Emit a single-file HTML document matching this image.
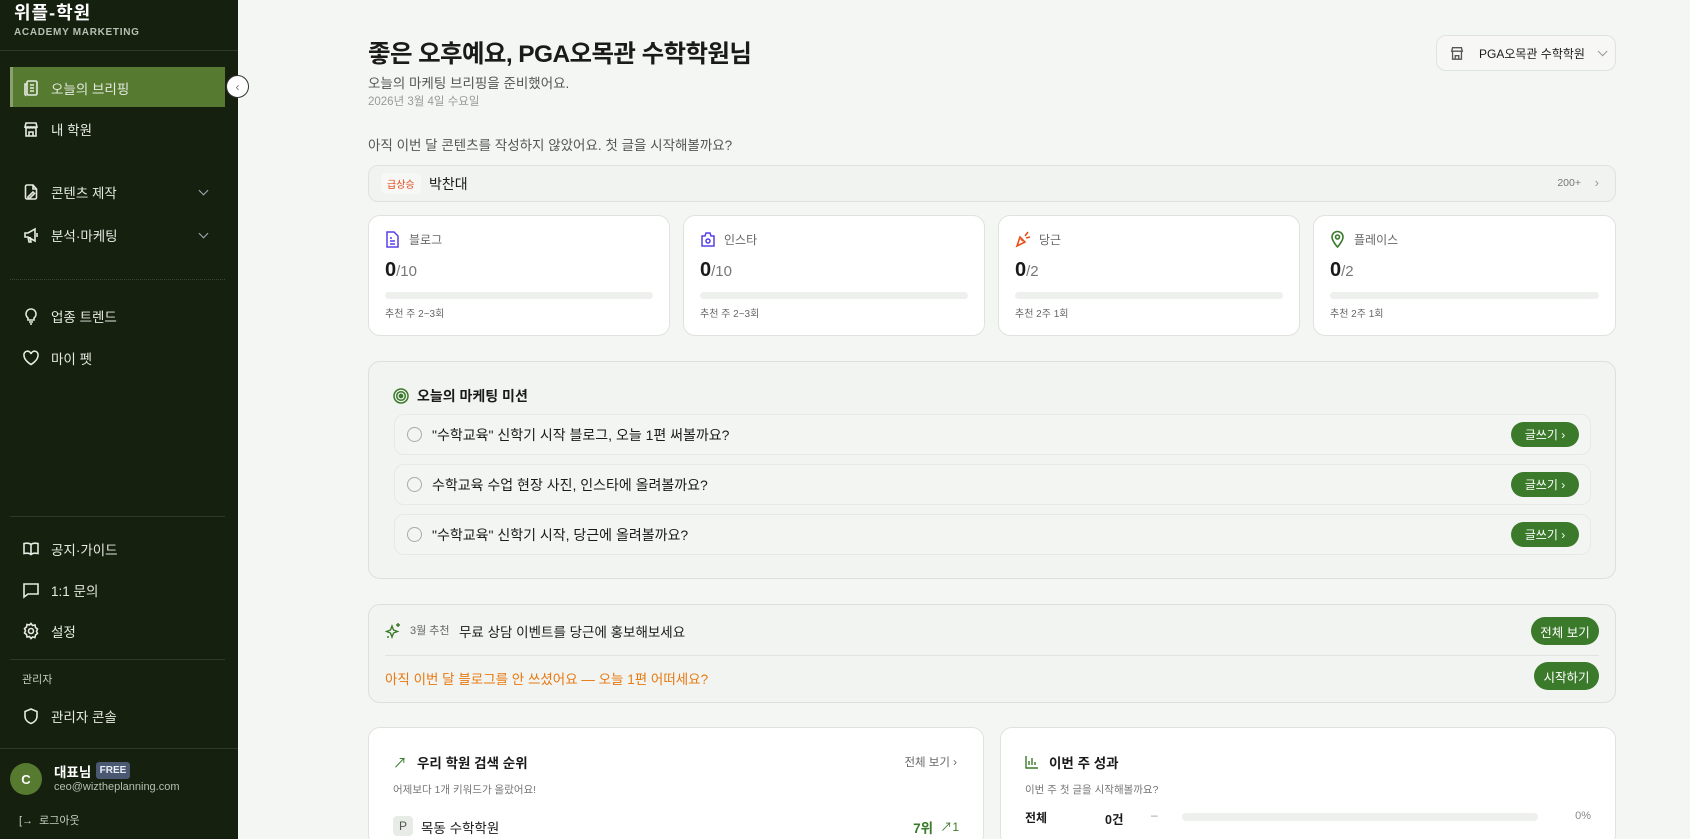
<!DOCTYPE html>
<html style="overflow:hidden"><head><meta charset="utf-8"><style>
*{box-sizing:border-box;margin:0;padding:0}
html,body{width:1690px;height:839px;overflow:hidden}
body{background:#f4f6f3;font-family:"Liberation Sans","Noto Sans CJK KR",sans-serif;color:#1a1a1a;position:relative}
.sb{position:absolute;left:0;top:0;width:238px;height:839px;background:#15200f;color:#e8ece4}
.abs{position:absolute}
.nav{position:absolute;left:22px;display:flex;align-items:center;font-size:13.5px;color:#e6eae2}
.nav svg{width:18px;height:18px;margin-right:11px;stroke:#e6eae2;fill:none;stroke-width:1.6}
.chev{position:absolute;left:200px;width:7px;height:7px;border-right:1.5px solid #aab;border-bottom:1.5px solid #aab;transform:rotate(45deg)}
.hr{position:absolute;left:10px;width:215px;border-top:1px solid #2e3a28}
.card{position:absolute;background:#fff;border:1px solid #dfe3dd;border-radius:12px}
.pill{position:absolute;background:#3a7a2a;color:#fff;border-radius:16px;font-size:12px;display:flex;align-items:center;justify-content:center}
.mi{position:absolute;left:25px;width:1197px;height:41px;border:1px solid #e6e9e4;border-radius:10px;background:#f3f5f2;font-size:14px;display:flex;align-items:center}
.mi .c{width:15px;height:15px;border:1.5px solid #aaa;border-radius:50%;margin:0 10px 0 12px}
.bar{position:absolute;left:16px;right:16px;top:76px;height:7px;border-radius:4px;background:#eef0ed}
</style></head><body>
<div class="sb">
 <div class="abs" style="left:14px;top:4px;font-size:18px;line-height:18px;font-weight:bold;color:#fff;letter-spacing:1px">위플-학원</div>
 <div class="abs" style="left:14px;top:28px;font-size:10px;line-height:10px;letter-spacing:.7px;color:#b8bfb3;font-weight:bold">ACADEMY MARKETING</div>
 <div class="abs" style="left:0;top:50px;width:238px;border-top:1px solid #2e3a28"></div>
 <div class="abs" style="left:10px;top:67px;width:215px;height:40px;background:#567a30;border-left:3px solid #8aa070"></div>
 <div class="nav" style="top:78px"><svg viewBox="0 0 18 18"><rect x="5" y="2" width="10" height="14" rx="1.5"/><path d="M5 5H3v10a1.5 1.5 0 0 0 1.5 1.5M8 6h4M8 9h4M8 12h4"/></svg>오늘의 브리핑</div>
 <div class="nav" style="top:119px"><svg viewBox="0 0 18 18"><path d="M3 7h12l-1-4H4zM4 7v9h10V7M7 16v-4h4v4M3 7q1.5 2 3 0q1.5 2 3 0q1.5 2 3 0q1.5 2 3 0"/></svg>내 학원</div>
 <div class="nav" style="top:182px"><svg viewBox="0 0 18 18"><path d="M11 2H5a1.5 1.5 0 0 0-1.5 1.5v11A1.5 1.5 0 0 0 5 16h8a1.5 1.5 0 0 0 1.5-1.5V6zM11 2v4h3.5M6 14l5-5 1.5 1.5-5 5H6z"/></svg>콘텐츠 제작</div><div class="chev" style="top:187px"></div>
 <div class="nav" style="top:225px"><svg viewBox="0 0 18 18"><path d="M3 7h3l7-4v12l-7-4H3zM6 11l1 5h2l-1-5M15 7v4"/></svg>분석·마케팅</div><div class="chev" style="top:230px"></div>
 <div class="abs" style="left:10px;top:279px;width:215px;border-top:1px dotted #3a4634"></div>
 <div class="nav" style="top:306px"><svg viewBox="0 0 18 18"><path d="M9 2a5 5 0 0 0-3 9v2h6v-2a5 5 0 0 0-3-9zM7 15h4M8 17h2"/></svg>업종 트렌드</div>
 <div class="nav" style="top:348px"><svg viewBox="0 0 18 18"><path d="M9 15.5S2 11.5 2 6.5A3.5 3.5 0 0 1 9 5a3.5 3.5 0 0 1 7 1.5c0 5-7 9-7 9z"/></svg>마이 펫</div>
 <div class="hr" style="top:516px"></div>
 <div class="nav" style="top:539px"><svg viewBox="0 0 18 18"><path d="M9 4.5C7.5 3 4.5 3 2 3.5v10c2.5-.5 5.5-.5 7 1 1.5-1.5 4.5-1.5 7-1v-10c-2.5-.5-5.5-.5-7 1zM9 4.5v10"/></svg>공지·가이드</div>
 <div class="nav" style="top:580px"><svg viewBox="0 0 18 18"><path d="M2 3h14v10H6l-4 3z"/></svg>1:1 문의</div>
 <div class="nav" style="top:621px"><svg viewBox="0 0 18 18"><circle cx="9" cy="9" r="2.5"/><path d="M9 1.5l1.5 2 2.5-.5.5 2.5 2 1.5-1 2.3 1 2.2-2 1.5-.5 2.5-2.5-.5L9 16.5l-1.5-2-2.5.5-.5-2.5-2-1.5 1-2.2-1-2.3 2-1.5.5-2.5 2.5.5z"/></svg>설정</div>
 <div class="hr" style="top:659px"></div>
 <div class="abs" style="left:22px;top:671px;font-size:11px;color:#c8cec3">관리자</div>
 <div class="nav" style="top:706px"><svg viewBox="0 0 18 18"><path d="M9 2l6 2.5v4.5c0 4-3 6.5-6 7.5-3-1-6-3.5-6-7.5V4.5z"/></svg>관리자 콘솔</div>
 <div class="abs" style="left:0;top:748px;width:238px;border-top:1px solid #2e3a28"></div>
 <div class="abs" style="left:10px;top:763px;width:32px;height:32px;border-radius:50%;background:#567a30;color:#fff;font-weight:bold;font-size:13px;display:flex;align-items:center;justify-content:center">C</div>
 <div class="abs" style="left:54px;top:761px;font-size:13.5px;font-weight:bold;color:#fff">대표님</div>
 <div class="abs" style="left:96px;top:762px;width:34px;height:17px;border-radius:3px;background:#4a5872;color:#e8ecf4;font-size:10px;font-weight:bold;display:flex;align-items:center;justify-content:center">FREE</div>
 <div class="abs" style="left:54px;top:781px;font-size:11px;color:#b7beb2">ceo@wiztheplanning.com</div>
 <div class="abs" style="left:19px;top:812px;font-size:11px;color:#c8cec3">[→ &nbsp;로그아웃</div>
</div>
<div class="abs" style="left:226px;top:75px;width:23px;height:23px;border-radius:50%;background:#fff;border:1px solid #333;font-size:12px;color:#777;display:flex;align-items:center;justify-content:center">‹</div>

<div class="abs" style="left:368px;top:35px;font-size:24.5px;font-weight:bold;letter-spacing:-.6px">좋은 오후예요, PGA오목관 수학학원님</div>
<div class="abs" style="left:368px;top:72px;font-size:13.5px;color:#555">오늘의 마케팅 브리핑을 준비했어요.</div>
<div class="abs" style="left:368px;top:93px;font-size:11.5px;color:#999">2026년 3월 4일 수요일</div>
<div class="abs" style="left:1436px;top:35px;width:180px;height:36px;border:1px solid #dfe3dd;border-radius:10px;background:#f7f8f6;font-size:12px;display:flex;align-items:center">
 <svg width="16" height="16" viewBox="0 0 18 18" style="margin:0 14px 0 12px" fill="none" stroke="#555" stroke-width="1.5"><path d="M3 7h12l-1-4H4zM4 7v9h10V7M7 16v-4h4v4"/></svg>PGA오목관 수학학원<span style="margin-left:12px;display:inline-block;width:7px;height:7px;border-right:1.3px solid #999;border-bottom:1.3px solid #999;transform:rotate(45deg) translateY(-3px)"></span></div>
<div class="abs" style="left:368px;top:134px;font-size:13.5px;color:#555">아직 이번 달 콘텐츠를 작성하지 않았어요. 첫 글을 시작해볼까요?</div>

<div class="abs" style="left:368px;top:165px;width:1248px;height:37px;border:1px solid #dfe3dd;border-radius:10px;background:#f1f3f0">
 <div class="abs" style="left:12px;top:7px;padding:3px 6px;background:#f7f7f5;border-radius:5px;color:#e04a1a;font-size:10px">급상승</div>
 <div class="abs" style="left:60px;top:8px;font-size:14px">박찬대</div>
 <div class="abs" style="right:34px;top:11px;font-size:10.5px;color:#777">200+</div>
 <div class="abs" style="right:16px;top:9px;font-size:13px;color:#999">›</div>
</div>

<div class="card" style="left:368px;top:215px;width:302px;height:121px"><svg class="abs" style="left:16px;top:15px" width="15" height="17" viewBox="0 0 15 17" fill="none" stroke="#5540e8" stroke-width="1.5"><path d="M2 1h7l4 4v11H2zM5 7h2M5 10h5M5 13h5"/></svg><div class="abs" style="left:40px;top:15px;font-size:12px;color:#666">블로그</div><div class="abs" style="left:16px;top:43px;font-size:20px;font-weight:bold">0<span style="font-weight:normal;font-size:15px;color:#777">/10</span></div><div class="bar"></div><div class="abs" style="left:16px;top:89px;font-size:10px;color:#666">추천 주 2~3회</div></div>
<div class="card" style="left:683px;top:215px;width:302px;height:121px"><svg class="abs" style="left:16px;top:15px" width="16" height="17" viewBox="0 0 16 17" fill="none" stroke="#5540e8" stroke-width="1.5"><path d="M2 5h3l1-3h4l1 3h3v10H2z"/><circle cx="8" cy="10" r="2"/></svg><div class="abs" style="left:40px;top:15px;font-size:12px;color:#666">인스타</div><div class="abs" style="left:16px;top:43px;font-size:20px;font-weight:bold">0<span style="font-weight:normal;font-size:15px;color:#777">/10</span></div><div class="bar"></div><div class="abs" style="left:16px;top:89px;font-size:10px;color:#666">추천 주 2~3회</div></div>
<div class="card" style="left:998px;top:215px;width:302px;height:121px"><svg class="abs" style="left:16px;top:14px" width="17" height="18" viewBox="0 0 17 18" fill="none" stroke="#e8501a" stroke-width="1.6"><path d="M2 16l3-9 5 5zM10 6l3-4M11 8l4-1M6 9l2 2"/></svg><div class="abs" style="left:40px;top:15px;font-size:12px;color:#666">당근</div><div class="abs" style="left:16px;top:43px;font-size:20px;font-weight:bold">0<span style="font-weight:normal;font-size:15px;color:#777">/2</span></div><div class="bar"></div><div class="abs" style="left:16px;top:89px;font-size:10px;color:#666">추천 2주 1회</div></div>
<div class="card" style="left:1313px;top:215px;width:303px;height:121px"><svg class="abs" style="left:16px;top:14px" width="15" height="18" viewBox="0 0 15 18" fill="none" stroke="#3a7a2a" stroke-width="1.6"><path d="M7.5 17S2 11 2 7a5.5 5.5 0 0 1 11 0c0 4-5.5 10-5.5 10z"/><circle cx="7.5" cy="7" r="2"/></svg><div class="abs" style="left:40px;top:15px;font-size:12px;color:#666">플레이스</div><div class="abs" style="left:16px;top:43px;font-size:20px;font-weight:bold">0<span style="font-weight:normal;font-size:15px;color:#777">/2</span></div><div class="bar"></div><div class="abs" style="left:16px;top:89px;font-size:10px;color:#666">추천 2주 1회</div></div>

<div class="abs" style="left:368px;top:361px;width:1248px;height:218px;border:1px solid #dcdfda;border-radius:12px;background:#f2f4f1">
 <svg class="abs" style="left:24px;top:26px" width="16" height="16" viewBox="0 0 16 16" fill="none" stroke="#3a7a2a" stroke-width="1.5"><circle cx="8" cy="8" r="7"/><circle cx="8" cy="8" r="4.3"/><circle cx="8" cy="8" r="1.6" fill="#3a7a2a"/></svg>
 <div class="abs" style="left:48px;top:24px;font-size:14px;font-weight:bold">오늘의 마케팅 미션</div>
 <div class="mi" style="top:52px"><span class="c"></span>"수학교육" 신학기 시작 블로그, 오늘 1편 써볼까요?</div>
 <div class="mi" style="top:102px"><span class="c"></span>수학교육 수업 현장 사진, 인스타에 올려볼까요?</div>
 <div class="mi" style="top:152px"><span class="c"></span>"수학교육" 신학기 시작, 당근에 올려볼까요?</div>
 <div class="pill" style="left:1142px;top:60px;width:68px;height:25px">글쓰기 ›</div>
 <div class="pill" style="left:1142px;top:110px;width:68px;height:25px">글쓰기 ›</div>
 <div class="pill" style="left:1142px;top:160px;width:68px;height:25px">글쓰기 ›</div>
</div>

<div class="abs" style="left:368px;top:604px;width:1248px;height:99px;border:1px solid #dcdfda;border-radius:12px;background:#f2f4f1">
 <svg class="abs" style="left:16px;top:17px" width="16" height="17" viewBox="0 0 16 17" fill="none" stroke="#3a7a2a" stroke-width="1.4"><path d="M7 4l1.5 4 4 1.5-4 1.5L7 15l-1.5-4-4-1.5 4-1.5zM13 1v4M11 3h4M3 14v2"/></svg>
 <div class="abs" style="left:41px;top:17px;font-size:11px;color:#666">3월 추천</div>
 <div class="abs" style="left:90px;top:16px;font-size:13.5px">무료 상담 이벤트를 당근에 홍보해보세요</div>
 <div class="pill" style="left:1162px;top:12px;width:68px;height:28px;border-radius:14px;font-size:12.5px">전체 보기</div>
 <div class="abs" style="left:16px;right:16px;top:50px;border-top:1px solid #e0e3de"></div>
 <div class="abs" style="left:16px;top:63px;font-size:13.5px;color:#e8780f">아직 이번 달 블로그를 안 쓰셨어요 — 오늘 1편 어떠세요?</div>
 <div class="pill" style="left:1165px;top:57px;width:65px;height:28px;border-radius:14px;font-size:12.5px">시작하기</div>
</div>

<div class="card" style="left:368px;top:727px;width:616px;height:120px">
 <div class="abs" style="left:24px;top:25px;font-size:14px;color:#3a7a2a">↗</div>
 <div class="abs" style="left:48px;top:24px;font-size:13.5px;font-weight:bold">우리 학원 검색 순위</div>
 <div class="abs" style="right:26px;top:26px;font-size:11.5px;color:#666">전체 보기 ›</div>
 <div class="abs" style="left:24px;top:54px;font-size:10.5px;color:#777">어제보다 1개 키워드가 올랐어요!</div>
 <div class="abs" style="left:24px;top:88px;width:20px;height:20px;border-radius:4px;background:#e8ece6;font-size:12px;color:#555;display:flex;align-items:center;justify-content:center">P</div>
 <div class="abs" style="left:52px;top:89px;font-size:13.5px">목동 수학학원</div>
 <div class="abs" style="right:50px;top:89px;font-size:13.5px;font-weight:bold;color:#3a7a2a">7위</div>
 <div class="abs" style="right:24px;top:90px;font-size:12px;color:#3a7a2a">↗1</div>
</div>
<div class="card" style="left:1000px;top:727px;width:616px;height:120px">
 <svg class="abs" style="left:24px;top:27px" width="14" height="14" viewBox="0 0 14 14" fill="none" stroke="#3a7a2a" stroke-width="1.4"><path d="M1 1v12h12M4 10V6M7 10V3M10 10V7"/></svg>
 <div class="abs" style="left:48px;top:24px;font-size:13.5px;font-weight:bold">이번 주 성과</div>
 <div class="abs" style="left:24px;top:54px;font-size:10.5px;color:#777">이번 주 첫 글을 시작해볼까요?</div>
 <div class="abs" style="left:24px;top:81px;font-size:12px;font-weight:bold">전체</div>
 <div class="abs" style="left:104px;top:81px;font-size:12.5px;font-weight:bold">0건</div>
 <div class="abs" style="left:150px;top:80px;font-size:12px;color:#999">–</div>
 <div class="abs" style="left:181px;top:85px;width:356px;height:8px;border-radius:4px;background:#eef0ed"></div>
 <div class="abs" style="right:24px;top:82px;font-size:11px;color:#888">0%</div>
</div>
</body></html>
